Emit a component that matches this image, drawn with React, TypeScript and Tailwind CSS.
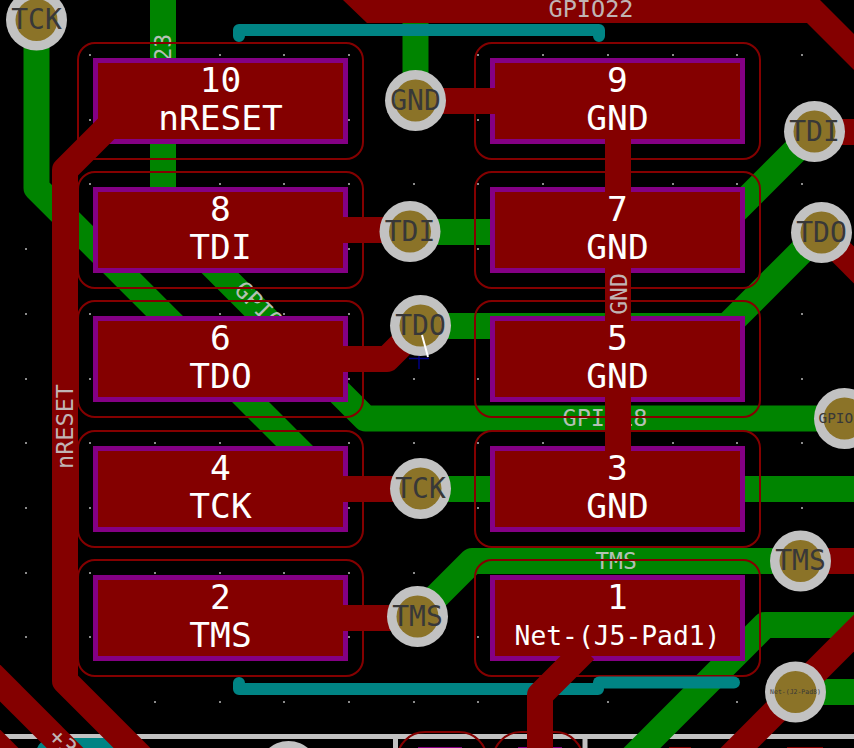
const red = 'stroke-[#840000]'
const green = 'stroke-[#008400]'

const pads = [
  { num: '10', net: 'nRESET', x: 93, y: 58 },
  { num: '9', net: 'GND', x: 490, y: 58 },
  { num: '8', net: 'TDI', x: 93, y: 187 },
  { num: '7', net: 'GND', x: 490, y: 187 },
  { num: '6', net: 'TDO', x: 93, y: 316 },
  { num: '5', net: 'GND', x: 490, y: 316 },
  { num: '4', net: 'TCK', x: 93, y: 446 },
  { num: '3', net: 'GND', x: 490, y: 446 },
  { num: '2', net: 'TMS', x: 93, y: 575 },
  { num: '1', net: 'Net-(J5-Pad1)', x: 490, y: 575 },
]

const vias = [
  { x: 36.5, y: 20, net: 'TCK', size: 28 },
  { x: 415.5, y: 100.5, net: 'GND', size: 28 },
  { x: 814.5, y: 131.5, net: 'TDI', size: 28 },
  { x: 410, y: 231.5, net: 'TDI', size: 28 },
  { x: 821.5, y: 232.5, net: 'TDO', size: 28 },
  { x: 420.5, y: 325.5, net: 'TDO', size: 28 },
  { x: 844.5, y: 418.5, net: 'GPIO18', size: 14.4 },
  { x: 420.5, y: 488.5, net: 'TCK', size: 28 },
  { x: 800.5, y: 561, net: 'TMS', size: 28 },
  { x: 417.5, y: 616.5, net: 'TMS', size: 28 },
  { x: 795.5, y: 692, net: 'Net-(J2-Pad8)', size: 6.5 },
  { x: 288.5, y: 771.5, net: '', size: 10 },
]

const backTracks = [
  'M36.5 20V188L330 481.5',
  'M163 0V216L365.5 418.5H844',
  'M415.5 0V100',
  'M410 232H714L814 132',
  'M420 326H727L821 232',
  'M420 489H860',
  'M417 616L472 561H800',
  'M795 692H860',
  'M860 625H765L620 770',
]

const frontTracks = [
  'M115 120L65 170V681L145 761',
  'M-10 673L90 773',
  'M-10 738L30 778',
  'M415 101H500',
  'M618 101V489',
  'M340 230H410',
  'M340 359H387L420 326',
  'M340 489H420',
  'M340 618H417',
  'M585 650L540 695V760',
  'M821 232L870 281',
  'M814 132H860',
  'M800 561H860',
  'M690 797L880 607',
]

const gridX = Array.from({ length: 13 }, (_, i) => Math.round(24.5 + i * 64.7))
const gridY = Array.from({ length: 11 }, (_, i) => Math.round(54 + i * 64.7))

function Silk({ x, y, rotate = 0, size = 23.5, children }: { x: number; y: number; rotate?: number; size?: number; children: string }) {
  return (
    <text
      transform={`translate(${x} ${y}) rotate(${rotate})`}
      textAnchor="middle"
      fontSize={size}
      className="fill-[#c8c8c8] opacity-90"
    >
      {children}
    </text>
  )
}

export default function App() {
  return (
    <div className="h-[748px] w-[854px] overflow-hidden bg-black">
      <svg width={854} height={748} viewBox="0 0 854 748" className="block font-['DejaVu_Sans_Mono',monospace]">
        {gridX.map((x) =>
          gridY.map((y) => <rect key={`${x}-${y}`} x={x} y={y} width={2} height={2} className="fill-[#8a8a8a]" />),
        )}

        <path d="M0 736.5H854M395.5 736.5V748M585 736.5V748" fill="none" strokeWidth={5} className="stroke-[#c2c2c2]" />

        <g fill="none" strokeWidth={26} strokeLinejoin="round" className={green}>
          {backTracks.map((d) => (
            <path key={d} d={d} />
          ))}
        </g>

        <Silk x={171} y={76} rotate={-90}>GPIO23</Silk>
        <Silk x={263} y={321} rotate={45}>GPIO23</Silk>
        <Silk x={605} y={426}>GPIO18</Silk>
        <Silk x={616} y={569} size={23}>TMS</Silk>
        <Silk x={595} y={334} size={23}>TDO</Silk>

        {pads.map((p) => (
          <rect
            key={p.num}
            x={p.x + 2.5}
            y={p.y + 2.5}
            width={250}
            height={81}
            strokeWidth={5}
            className="fill-[#840000] stroke-[#840084]"
          />
        ))}
        <rect x={418} y={747} width={44} height={1} className="fill-[#840084]" />
        <rect x={518} y={747} width={44} height={1} className="fill-[#840084]" />
        <rect x={669} y={747} width={22} height={1} className="fill-[#840000]" />
        <rect x={787} y={747} width={36} height={1} className="fill-[#840000]" />

        {pads.map((p) => (
          <rect
            key={p.num}
            x={p.x - 15}
            y={p.y - 15}
            width={285}
            height={116}
            rx={17}
            fill="none"
            strokeWidth={2}
            className={red}
          />
        ))}
        <rect x={397} y={732} width={90} height={60} rx={28} fill="none" strokeWidth={2} className={red} />
        <rect x={493} y={732} width={90} height={60} rx={28} fill="none" strokeWidth={2} className={red} />

        <g fill="none" strokeWidth={12} strokeLinecap="round" strokeLinejoin="round" className="stroke-[#008484]">
          <path d="M239 36V30H599V36" />
          <path d="M239 683V689H598" />
          <path d="M599 682.5H734" />
          <path d="M44 755Q44 746 54 746H120" strokeWidth={16} />
        </g>

        <polygon points="343,0 820,0 854,34 854,70 807,23 367,23" className="fill-[#840000]" />
        <g fill="none" strokeWidth={26} strokeLinejoin="round" className={red}>
          {frontTracks.map((d) => (
            <path key={d} d={d} />
          ))}
        </g>

        <Silk x={591} y={17}>GPIO22</Silk>
        <Silk x={73} y={426.5} rotate={-90}>nRESET</Silk>
        <Silk x={627} y={294} rotate={-90} size={23}>GND</Silk>
        <Silk x={72} y={763} rotate={45}>+3.3V</Silk>

        {vias.map((v) => (
          <g key={`${v.x}-${v.y}`}>
            <circle cx={v.x} cy={v.y} r={30.5} className="fill-[#c2c2c2]" />
            <circle cx={v.x} cy={v.y} r={21} className="fill-[#8b7328]" />
            <text x={v.x} y={v.y + v.size * 0.33} textAnchor="middle" fontSize={v.size} className="fill-[#383838]">
              {v.net}
            </text>
          </g>
        ))}

        {pads.map((p) => (
          <g key={p.num} textAnchor="middle" className="fill-white">
            <text x={p.x + 127.5} y={p.y + 34} fontSize={34.5}>{p.num}</text>
            <text x={p.x + 127.5} y={p.y + (p.num === '1' ? 70 : 71.5)} fontSize={p.num === '1' ? 26.3 : 34.5}>{p.net}</text>
          </g>
        ))}

        <path d="M422 335L428 357" strokeWidth={2} className="stroke-white" />
        <path d="M409 358.5H429M419 356V369" strokeWidth={1.5} className="stroke-[#000084]" />
      </svg>
    </div>
  )
}
